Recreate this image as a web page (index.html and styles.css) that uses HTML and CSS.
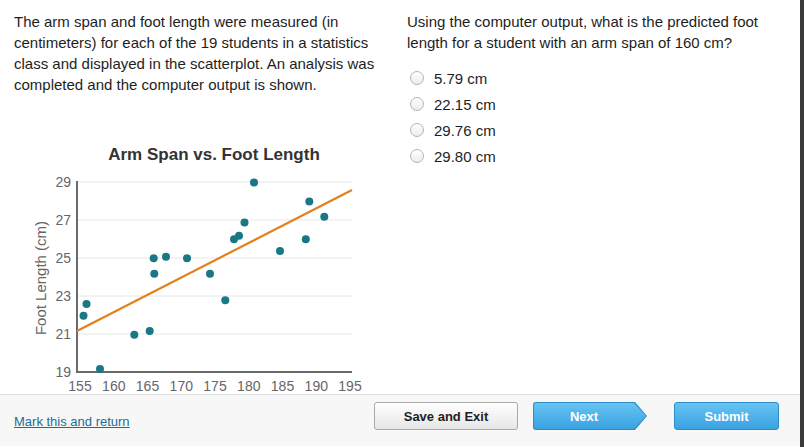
FILE: index.html
```html
<!DOCTYPE html>
<html>
<head>
<meta charset="utf-8">
<link rel="stylesheet" href="styles.css">
</head>
<body>
<div class="page">
  <main class="main">
    <section class="left">
      <p class="prompt">The arm span and foot length were measured (in centimeters) for each of the 19 students in a statistics class and displayed in the scatterplot. An analysis was completed and the computer output is shown.</p>
      <svg class="chart" width="400" height="260" viewBox="0 134 400 260">
        <text class="chart-title" x="214" y="160">Arm Span vs. Foot Length</text>
        <g class="grid">
          <line x1="77" y1="182" x2="352" y2="182"/>
          <line x1="77" y1="220" x2="352" y2="220"/>
          <line x1="77" y1="258" x2="352" y2="258"/>
          <line x1="77" y1="296" x2="352" y2="296"/>
          <line x1="77" y1="334" x2="352" y2="334"/>
        </g>
        <g class="axis">
          <line x1="77" y1="181" x2="77" y2="373"/>
          <line x1="76" y1="372" x2="352" y2="372"/>
        </g>
        <g class="ylab">
          <text x="71" y="187">29</text>
          <text x="71" y="225">27</text>
          <text x="71" y="263">25</text>
          <text x="71" y="301">23</text>
          <text x="71" y="339">21</text>
          <text x="71" y="377">19</text>
        </g>
        <g class="xlab">
          <text x="80" y="391">155</text>
          <text x="113.8" y="391">160</text>
          <text x="147.5" y="391">165</text>
          <text x="181.3" y="391">170</text>
          <text x="215" y="391">175</text>
          <text x="248.8" y="391">180</text>
          <text x="282.5" y="391">185</text>
          <text x="316.3" y="391">190</text>
          <text x="350" y="391">195</text>
        </g>
        <text class="ytitle" x="46" y="278" transform="rotate(-90 46 278)">Foot Length (cm)</text>
        <line class="fit" x1="77" y1="331" x2="352" y2="190"/>
        <g class="dots">
          <circle cx="83.5" cy="315.7" r="4"/>
          <circle cx="86.5" cy="304" r="4"/>
          <circle cx="100" cy="369" r="4"/>
          <circle cx="134.3" cy="334.7" r="4"/>
          <circle cx="149.7" cy="331" r="4"/>
          <circle cx="153.7" cy="258.3" r="4"/>
          <circle cx="154.3" cy="273.7" r="4"/>
          <circle cx="166" cy="256.8" r="4"/>
          <circle cx="187" cy="258.3" r="4"/>
          <circle cx="210" cy="273.7" r="4"/>
          <circle cx="225.3" cy="300.3" r="4"/>
          <circle cx="234" cy="239.3" r="4"/>
          <circle cx="239" cy="235.7" r="4"/>
          <circle cx="244.5" cy="222.5" r="4"/>
          <circle cx="254" cy="182.5" r="4"/>
          <circle cx="280" cy="251" r="4"/>
          <circle cx="305.8" cy="239.3" r="4"/>
          <circle cx="309.3" cy="201.5" r="4"/>
          <circle cx="324.3" cy="216.8" r="4"/>
        </g>
      </svg>
    </section>
    <section class="right">
      <p class="question">Using the computer output, what is the predicted foot length for a student with an arm span of 160 cm?</p>
      <ul class="options">
        <li class="option"><span class="radio"></span><span>5.79 cm</span></li>
        <li class="option"><span class="radio"></span><span>22.15 cm</span></li>
        <li class="option"><span class="radio"></span><span>29.76 cm</span></li>
        <li class="option"><span class="radio"></span><span>29.80 cm</span></li>
      </ul>
    </section>
  </main>
  <footer class="footer">
    <a class="mark" href="#">Mark this and return</a>
    <div class="actions">
      <button class="btn btn-save">Save and Exit</button>
      <div class="next"><div class="next-inner">Next</div></div>
      <button class="btn btn-submit">Submit</button>
    </div>
  </footer>
</div>
</body>
</html>
```

FILE: styles.css
```css
html, body {
  margin: 0;
  padding: 0;
  background: #fff;
}

body {
  width: 804px;
  height: 447px;
  overflow: hidden;
  font-family: "Liberation Sans", Arial, Helvetica, sans-serif;
  color: #1e1e1e;
}

.page {
  width: 800px;
  height: 447px;
  border-right: 4px solid #3a3a3a;
  display: flex;
  flex-direction: column;
}

.main {
  height: 394px;
  display: grid;
  grid-template-columns: 393px 1fr;
}

.left {
  display: flex;
  flex-direction: column;
}

.prompt {
  margin: 0;
  padding: 11px 12px 0 14px;
  font-size: 15px;
  line-height: 21px;
}

.chart {
  display: block;
  margin-top: auto;
}

.chart-title {
  font-family: "Liberation Sans", Arial, sans-serif;
  font-size: 17px;
  font-weight: bold;
  fill: #333;
  text-anchor: middle;
}

.grid line {
  stroke: #e6e6e6;
  stroke-width: 1;
}

.axis line {
  stroke: #6a6a6a;
  stroke-width: 2;
}

.ylab text {
  font-family: "Liberation Sans", Arial, sans-serif;
  font-size: 14px;
  fill: #666;
  text-anchor: end;
}

.xlab text {
  font-family: "Liberation Sans", Arial, sans-serif;
  font-size: 14px;
  fill: #666;
  text-anchor: middle;
}

.ytitle {
  font-family: "Liberation Sans", Arial, sans-serif;
  font-size: 15px;
  fill: #666;
  text-anchor: middle;
}

.fit {
  stroke: #e4801c;
  stroke-width: 2.2;
}

.dots circle {
  fill: #1a7886;
}

.right {
  padding: 11px 20px 0 14px;
}

.question {
  margin: 0;
  font-size: 15px;
  line-height: 21px;
}

.options {
  list-style: none;
  margin: 12px 0 0 0;
  padding: 0;
}

.option {
  display: flex;
  align-items: center;
  height: 26px;
  font-size: 15px;
  padding-left: 3px;
}

.radio {
  width: 12px;
  height: 12px;
  border: 1px solid #b4b4b4;
  border-radius: 50%;
  background: linear-gradient(#ffffff, #ececec);
  margin-right: 10px;
  flex: none;
}

.footer {
  height: 52px;
  box-sizing: border-box;
  border-top: 1px solid #dedede;
  background: #f7f7f7;
  display: flex;
  align-items: flex-start;
  padding: 7px 21px 0 14px;
}

.mark {
  font-size: 13px;
  line-height: 16px;
  color: #1b6d93;
  text-decoration: underline;
  margin-top: 12px;
}

.actions {
  margin-left: auto;
  display: flex;
  align-items: center;
}

.btn {
  height: 28px;
  border-radius: 3px;
  font-family: "Liberation Sans", Arial, sans-serif;
  font-size: 13px;
  font-weight: bold;
  padding: 0;
  cursor: pointer;
}

.btn-save {
  width: 144px;
  border: 1px solid #a9a9a9;
  background: linear-gradient(#ffffff, #e6e6e6);
  color: #1e1e1e;
}

.next {
  width: 114px;
  height: 28px;
  margin-left: 15px;
  background: #2c8ccb;
  clip-path: polygon(0 0, calc(100% - 12px) 0, 100% 50%, calc(100% - 12px) 100%, 0 100%);
  padding: 1px;
  box-sizing: border-box;
  border-radius: 3px 0 0 3px;
}

.next-inner {
  height: 100%;
  background: linear-gradient(#67c3f2, #3aa2e1);
  clip-path: polygon(0 0, calc(100% - 12px) 0, 100% 50%, calc(100% - 12px) 100%, 0 100%);
  color: #fff;
  font-size: 13px;
  font-weight: bold;
  display: flex;
  align-items: center;
  justify-content: center;
  padding-right: 12px;
  border-radius: 2px 0 0 2px;
}

.btn-submit {
  width: 105px;
  margin-left: 27px;
  border: 1px solid #2c8ccb;
  background: linear-gradient(#67c3f2, #3aa2e1);
  color: #fff;
}
```
